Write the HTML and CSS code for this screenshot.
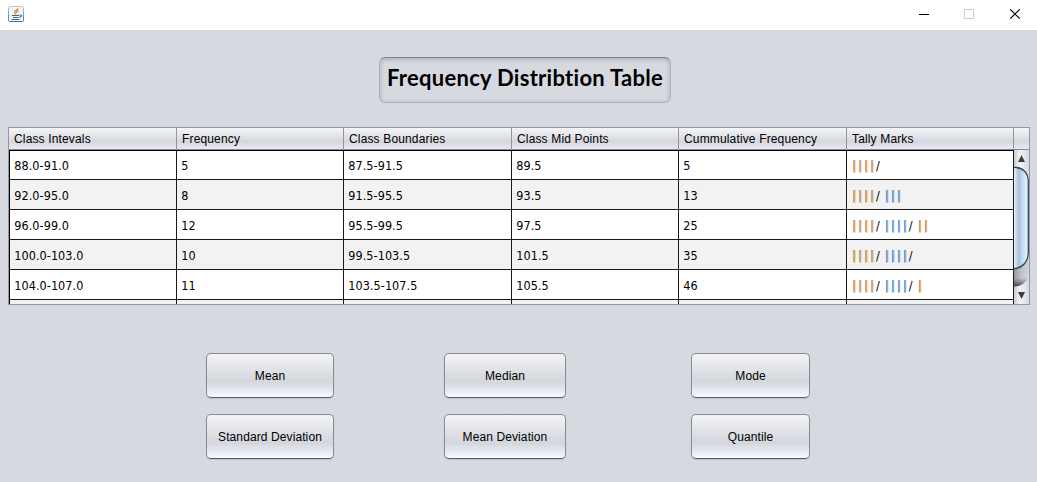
FILE: index.html
```
<!DOCTYPE html>
<html lang="en">
<head>
<meta charset="utf-8">
<title>Frequency Distribtion Table</title>
<link rel="stylesheet" href="styles.css">
</head>
<body>
<header class="titlebar">
  <svg class="java" width="16" height="16" viewBox="0 0 16 16">
    <defs><linearGradient id="jb" x1="0" y1="0" x2="0" y2="1"><stop offset="0" stop-color="#b9c6d2"/><stop offset="1" stop-color="#4f7593"/></linearGradient></defs>
    <rect x=".5" y=".5" width="15" height="15" rx="1" fill="#f1f4f7" stroke="url(#jb)"/>
    <path d="M10 2.500C9.500 4 6 4.500 6.500 6.500Q7 7.500 8 8.500M10.500 4.500Q8 5.500 8.700 7" fill="none" stroke="#ee8a2c" stroke-width="1.400"/>
    <path d="M4 9.500H11M5 11.500H10.500M3.500 13.500H11.500M11.500 9.200Q14 8.600 13.300 10.400L11.300 11.500" fill="none" stroke="#3d6b8d" stroke-width="1.100"/>
  </svg>
  <svg class="controls" width="102" height="12" viewBox="0 0 102 12" shape-rendering="crispEdges">
    <path d="M0 6.500H10" stroke="#000"/>
    <rect x="45.500" y="1.500" width="9" height="9" fill="none" stroke="#ccc"/>
    <path d="M91.300 1.300L100.700 10.700M100.700 1.300L91.300 10.700" stroke="#000" stroke-width="1.200" shape-rendering="auto"/>
  </svg>
</header>
<main class="window">
  <h1 class="title">Frequency Distribtion Table</h1>
  <section class="pane">
    <div class="row head"><span>Class Intevals</span><span>Frequency</span><span>Class Boundaries</span><span>Class Mid Points</span><span>Cummulative Frequency</span><span>Tally Marks</span><span></span></div>
    <div class="view">
      <div class="rows">
        <div class="row"><span>88.0-91.0</span><span>5</span><span>87.5-91.5</span><span>89.5</span><span>5</span><span class="tally"><b>||||</b>/</span></div>
        <div class="row"><span>92.0-95.0</span><span>8</span><span>91.5-95.5</span><span>93.5</span><span>13</span><span class="tally"><b>||||</b>/ <i>|||</i></span></div>
        <div class="row"><span>96.0-99.0</span><span>12</span><span>95.5-99.5</span><span>97.5</span><span>25</span><span class="tally"><b>||||</b>/ <i>||||</i>/ <b>||</b></span></div>
        <div class="row"><span>100.0-103.0</span><span>10</span><span>99.5-103.5</span><span>101.5</span><span>35</span><span class="tally"><b>||||</b>/ <i>||||</i>/</span></div>
        <div class="row"><span>104.0-107.0</span><span>11</span><span>103.5-107.5</span><span>105.5</span><span>46</span><span class="tally"><b>||||</b>/ <i>||||</i>/ <b>|</b></span></div>
        <div class="row"><span></span><span></span><span></span><span></span><span></span><span></span></div>
      </div>
      <svg class="scroll" width="15" height="154" viewBox="0 0 15 154">
        <defs>
          <linearGradient id="btn"><stop offset="0" stop-color="#c9ccd2"/><stop offset=".4" stop-color="#f3f4f6"/><stop offset="1" stop-color="#d5d8df"/></linearGradient>
          <linearGradient id="thumb"><stop offset="0" stop-color="#eef5fb"/><stop offset=".15" stop-color="#c7d8e8"/><stop offset=".35" stop-color="#a9c0d8"/><stop offset=".6" stop-color="#c5dcf0"/><stop offset="1" stop-color="#e9f8ff"/></linearGradient>
          <linearGradient id="track"><stop offset="0" stop-color="#969aa1"/><stop offset=".5" stop-color="#c0c3c9"/><stop offset="1" stop-color="#d3d5da"/></linearGradient>
          <linearGradient id="shade" x1="0" y1="0" x2="0" y2="1"><stop offset="0" stop-color="#555" stop-opacity="0"/><stop offset="1" stop-color="#333" stop-opacity=".85"/></linearGradient>
        </defs>
        <rect width="15" height="154" fill="url(#btn)"/>
        <path d="M0 110H15V127Q10 136.500 0 136.500Z" fill="url(#track)"/>
        <path d="M0 128H14Q9 136.500 0 136.500Z" fill="url(#shade)"/>
        <path d="M0 17.500C8 17 14.300 22 14.300 32V102C14.300 112 8 118.500 0 118.500Z" fill="url(#thumb)"/>
        <path d="M0 17.500C8 17 14.300 22 14.300 32V102C14.300 112 8 118.500 0 118.500" fill="none" stroke="#2c475f" stroke-width="1.300"/>
        <path d="M4 12L7.500 5L11 12ZM4 142L7.500 149L11 142Z" fill="#3b3c3f"/>
      </svg>
    </div>
  </section>
  <nav class="buttons">
    <button>Mean</button><button>Median</button><button>Mode</button>
    <button>Standard Deviation</button><button>Mean Deviation</button><button>Quantile</button>
  </nav>
</main>
</body>
</html>
```
FILE: styles.css
```
* { box-sizing: border-box; }
body { margin: 0; width: 1037px; height: 482px; overflow: hidden; background: #d6d9e0; color: #000; font: 12px "Liberation Sans", Arial, sans-serif; }
.titlebar { height: 30px; background: #fff; display: flex; justify-content: space-between; padding: 6px 16px 0 8px; }
.controls { margin-top: 2px; }
.window { padding: 27px 7px 0 8px; }
.title { width: 292px; height: 46px; margin: 0 0 24px 371px; border: 1px solid #b0b3b9; border-top-color: #85878c; border-radius: 6px; box-shadow: inset 0 1px 4px #a1a4aa; font: bold 22px/40px Lato, sans-serif; letter-spacing: .28px; font-variant-ligatures: none; text-align: center; white-space: nowrap; }
.pane { width: 1022px; height: 178px; border: 1px solid #9297a1; }
.row { display: grid; grid-template-columns: 168px 167px 168px 167px 168px 167px 1fr; height: 30px; }
.row span { padding-left: 5px; white-space: pre; border-right: 1px solid #191919; border-bottom: 1px solid #191919; }
.row.head { height: 22px; background: linear-gradient(#f5f6f8, #dfe1e6 45%, #d4d7de 65%, #e8ebf3); border-bottom: 1px solid #85888f; }
.row.head span { border-bottom: 0; border-right: 1px solid #92959c; line-height: 22px; letter-spacing: .15px; }
.row.head span:last-child { border-right: 0; }
.view { display: flex; height: 154px; overflow: hidden; }
.rows { width: 1005px; border-top: 1px solid #000; border-left: 1px solid #000; font: 12.5px "DejaVu Sans Condensed", "DejaVu Sans", sans-serif; font-stretch: condensed; }
.rows .row { grid-template-columns: 167px 167px 168px 167px 168px 167px; grid-template-rows: 100%; background: #fff; }
.rows .row:first-child { height: 29px; }
.rows .row:nth-child(even) { background: #f2f2f2; }
.rows .row span { padding-left: 4.3px; line-height: 31px; letter-spacing: .06px; }
.rows .row:first-child span { line-height: 30px; }
.rows .row .tally { letter-spacing: 1.750px; word-spacing: -2px; padding-left: 5px; }
.tally b, .tally i { letter-spacing: 2.200px; }
.tally b { font-weight: normal; color: #c0701f; text-shadow: 1px 0 #c0701f90; }
.tally i { font-style: normal; color: #2278bf; text-shadow: 1px 0 #2278bf90; }
.scroll { flex: none; }
.buttons { display: grid; grid-template-columns: 128px 122px 119px; grid-auto-rows: 45px; row-gap: 16px; margin: 48px 0 0 198px; column-gap: 110px; }
.buttons button:nth-child(3n) { margin-left: 15px; margin-right: -15px; }
.buttons button { padding: 0; border: 1px solid #898b90; border-bottom-color: #57595d; border-radius: 5px; background: linear-gradient(#f3f4f6, #e1e3e7 35%, #d3d6dd 65%, #eef1f8 92%, #f9fcff); font: inherit; color: #000; letter-spacing: .1px; box-shadow: 0 1px 1px #bfc2c8; }
```
